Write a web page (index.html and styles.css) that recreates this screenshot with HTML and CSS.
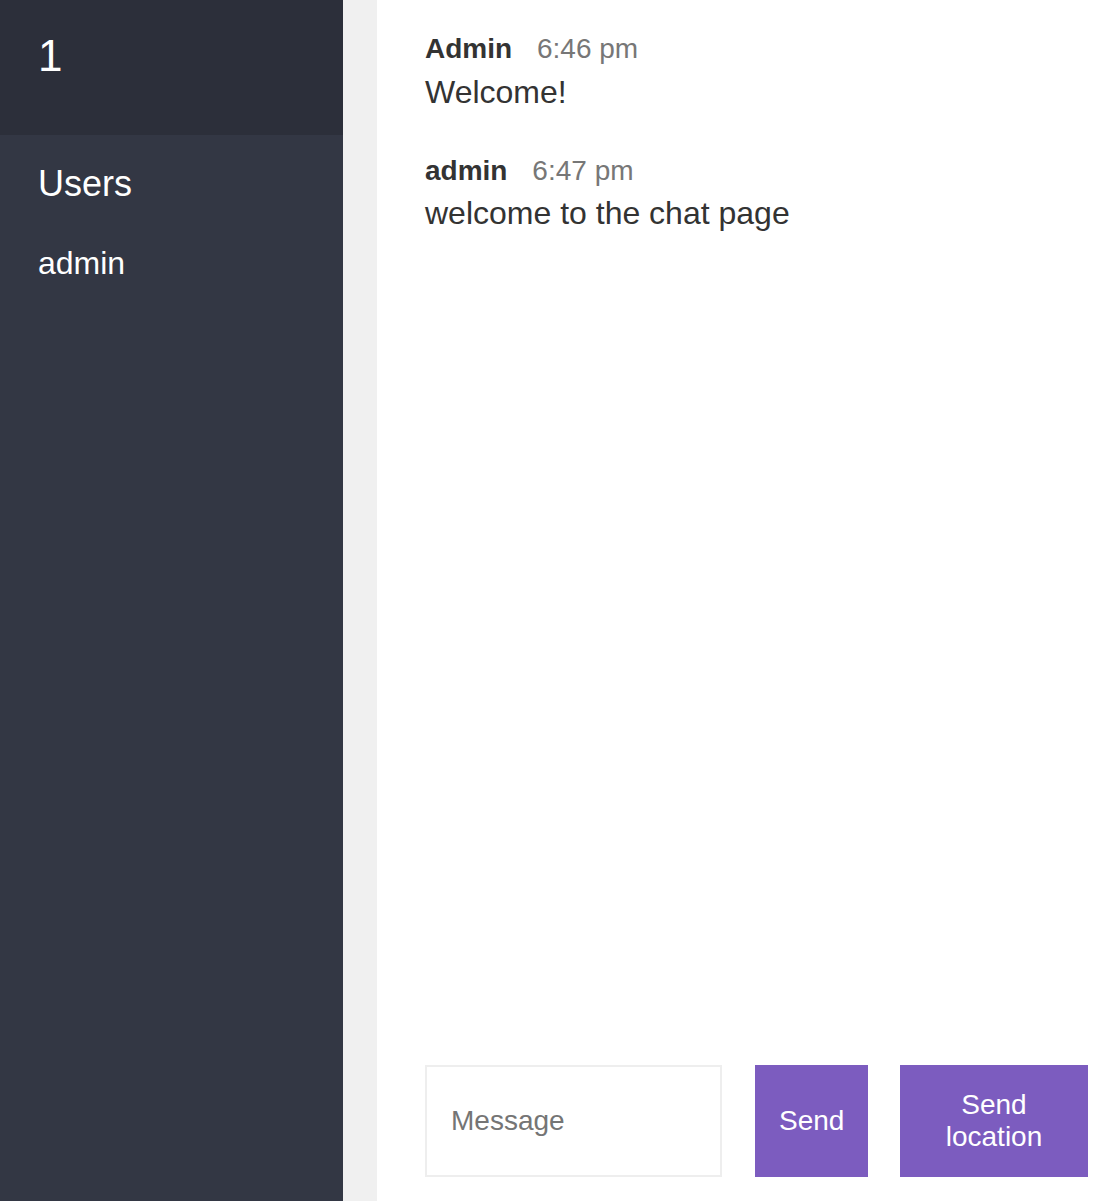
FILE: index.html
```html
<!DOCTYPE html>
<html lang="en">
<head>
<meta charset="utf-8">
<title>Chat</title>
<link rel="stylesheet" href="styles.css">
</head>
<body>
<div class="chat">
  <aside class="sidebar">
    <h2 class="room-title">1</h2>
    <h3 class="list-title">Users</h3>
    <ul class="users">
      <li>admin</li>
    </ul>
  </aside>
  <div class="track"></div>
  <main class="main">
    <div class="messages">
      <div class="message">
        <p><span class="message__name">Admin</span> <span class="message__meta">6:46 pm</span></p>
        <p>Welcome!</p>
      </div>
      <div class="message">
        <p><span class="message__name">admin</span> <span class="message__meta">6:47 pm</span></p>
        <p>welcome to the chat page</p>
      </div>
    </div>
    <div class="compose">
      <form class="compose__form">
        <input class="compose__input" name="message" placeholder="Message" autocomplete="off">
        <button type="button" class="btn btn--send">Send</button>
      </form>
      <button type="button" class="btn btn--location">Send location</button>
    </div>
  </main>
</div>
</body>
</html>
```
FILE: styles.css
```css
* {
  margin: 0;
  padding: 0;
  box-sizing: border-box;
}

body {
  font-family: "Liberation Sans", Arial, Helvetica, sans-serif;
  line-height: 1.4;
  color: #333333;
  font-size: 32px;
}

.chat {
  display: flex;
  height: 100vh;
}

.sidebar {
  width: 343px;
  flex: none;
  background: #333744;
  color: #ffffff;
}

.room-title {
  font-weight: 400;
  font-size: 44px;
  background: #2c2f3a;
  height: 135px;
  padding: 25px 38px 0;
}

.list-title {
  font-weight: 400;
  font-size: 36px;
  padding: 24px 38px 0;
}

.users {
  list-style: none;
  font-size: 32px;
  padding: 32px 38px 0;
}

.track {
  width: 34px;
  flex: none;
  background: #f0f0f0;
}

.main {
  flex: 1;
  display: flex;
  flex-direction: column;
  min-width: 0;
}

.messages {
  flex: 1;
  padding: 25px 48px 0;
}

.message {
  margin-bottom: 32px;
}

.message__name {
  font-weight: 700;
  font-size: 28px;
  margin-right: 16px;
}

.message__meta {
  color: #777777;
  font-size: 28px;
}

.compose {
  display: flex;
  padding: 0 8px 24px 48px;
}

.compose__form {
  display: flex;
  flex: 1;
  min-width: 0;
  margin-right: 32px;
}

.compose__input {
  flex: 1 1 0;
  width: 0;
  min-width: 0;
  border: 2px solid #eeeeee;
  padding: 24px;
  margin-right: 33px;
  font-family: "Liberation Sans", Arial, sans-serif;
  font-size: 28px;
  color: #333333;
  outline: none;
}

.compose__input::placeholder {
  color: #757575;
}

.btn {
  height: 112px;
  padding: 24px;
  background: #7c5cbf;
  border: none;
  color: #ffffff;
  font-family: "Liberation Sans", Arial, sans-serif;
  font-size: 28px;
  line-height: 1.15;
  cursor: pointer;
}

.btn--send {
  width: 113px;
  flex: none;
}

.btn--location {
  width: 188px;
  flex: none;
}
```
